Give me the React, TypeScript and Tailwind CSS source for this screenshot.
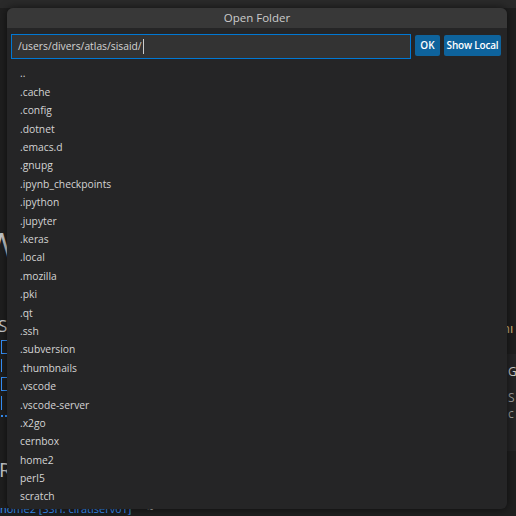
import React from 'react'

const folders = [
  '..',
  '.cache',
  '.config',
  '.dotnet',
  '.emacs.d',
  '.gnupg',
  '.ipynb_checkpoints',
  '.ipython',
  '.jupyter',
  '.keras',
  '.local',
  '.mozilla',
  '.pki',
  '.qt',
  '.ssh',
  '.subversion',
  '.thumbnails',
  '.vscode',
  '.vscode-server',
  '.x2go',
  'cernbox',
  'home2',
  'perl5',
  'scratch',
]

const font = { fontFamily: '"Open Sans", "Noto Sans", sans-serif' }

const Welcome: React.FC = () => (
  <div className="flex h-full flex-col">
    <div className="h-[8px] bg-[#2a2a2a]" />
    <div className="flex flex-1 text-[#9d9d9d]">
      <div className="-ml-[14px] flex w-[30px] flex-col">
        <div className="mt-[218px] h-[38px] text-[34px] leading-[38px] text-[#c8c8c8]">W</div>
        <div className="mt-[4px] h-[26px] text-[24px] leading-[26px] text-[#8a8a8a]">E</div>
        <div className="mt-[22px] ml-[12px] text-[17px] leading-[20px] text-[#cccccc]">S</div>
        <div className="ml-[15px] mt-[4px] flex flex-col gap-[5px]">
          <div className="h-[14px] w-[6px] border-[1.5px] border-r-0 border-[#3794ff]" />
          <div className="h-[13px] w-[6px] border-l-[1.5px] border-[#3794ff]" />
          <div className="h-[14px] w-[6px] border-[1.5px] border-r-0 border-[#3794ff]" />
          <div className="h-[14px] w-[6px] border-l-[1.5px] border-[#3794ff]" />
          <div className="h-[6px] w-[6px] border-t-[2px] border-dotted border-[#3794ff]" />
        </div>
        <div className="ml-[13px] mt-[38px] text-[20px] leading-[22px] text-[#cccccc]">R</div>
      </div>
      <div className="flex-1" />
      <div className="flex w-[10px] flex-col">
        <div className="mt-[312px] -ml-[4px] text-[13px] leading-[16px] text-[#d7ba7d]">nı</div>
        <div className="mt-[18px] flex h-[97px] flex-col bg-[#252526] pl-[2px] text-[12px] leading-[16px] text-[#cccccc]">
          <div className="mt-[10px]">G</div>
          <div className="mt-[10px] text-[#9d9d9d]">S</div>
          <div className="text-[#9d9d9d]">c</div>
        </div>
      </div>
    </div>
    <div className="flex h-[8px] items-start gap-[16px] overflow-hidden text-[11px] leading-[12px] text-[#3794ff]">
      <span className="-mt-[5px]">home2 [SSH: ciratiserv01]</span>
      <span className="-mt-[5px] text-[#cccccc]">~</span>
    </div>
  </div>
)

export default function App() {
  return (
    <div className="relative h-[516px] w-[516px] overflow-hidden bg-[#1f1f1f]" style={font}>
      <Welcome />
      <div className="absolute left-[7px] top-[8px] flex h-[501px] w-[500px] flex-col overflow-hidden rounded-[6px] bg-[#252526] shadow-[0_0_8px_rgba(0,0,0,0.6)]">
        <div className="flex h-[20px] items-center justify-center bg-[#383838] text-[11.5px] text-[#cccccc]">
          Open Folder
        </div>
        <div className="mt-[6px] flex items-start gap-[4px] px-[4px]">
          <div className="flex h-[25px] w-[400px] items-center border border-[#0078d4] bg-[#333333] pl-[6px] text-[10.3px] text-[#d4d4d4]">
            <span>/users/divers/atlas/sisaid/</span>
            <span className="ml-[1px] h-[15px] w-[1px] bg-[#cccccc]" />
          </div>
          <button className="mt-[1px] h-[21px] w-[25px] whitespace-nowrap rounded-[2px] bg-[#0e639c] text-[10px] font-semibold text-white">
            OK
          </button>
          <button className="mt-[1px] h-[21px] w-[57px] whitespace-nowrap rounded-[2px] bg-[#0e639c] text-[10px] font-semibold tracking-[-0.2px] text-white">
            Show Local
          </button>
        </div>
        <div className="mt-[6px] flex flex-col">
          {folders.map(name => (
            <div key={name} className="flex h-[18.4px] items-center pl-[13px] text-[10.3px] text-[#d4d4d4]">
              {name}
            </div>
          ))}
        </div>
      </div>
    </div>
  )
}
